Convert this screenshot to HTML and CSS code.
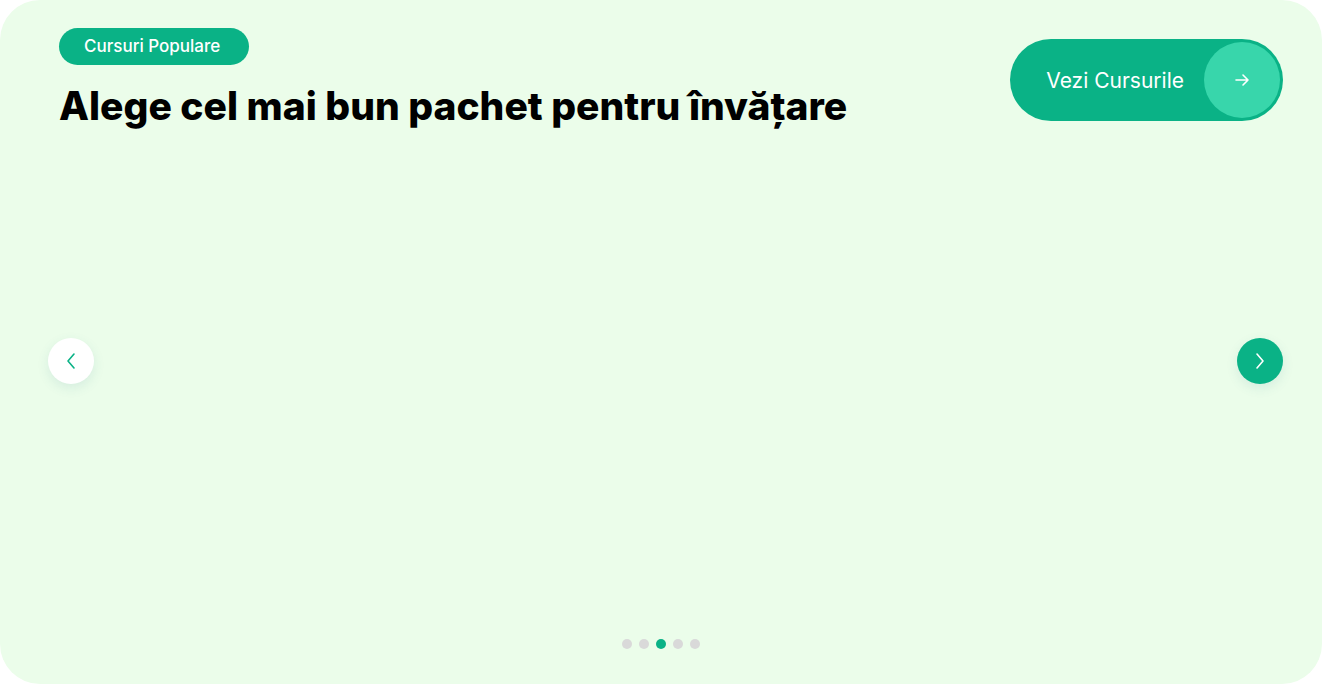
FILE: index.html
```html
<!DOCTYPE html>
<html lang="ro">
<head>
<meta charset="utf-8">
<title>Cursuri Populare</title>
<link rel="stylesheet" href="styles.css">
</head>
<body>
<section class="hero">
  <header class="hero-head">
    <div class="hero-titles">
      <span class="badge">Cursuri Populare</span>
      <h1 class="title">Alege cel mai bun pachet pentru învățare</h1>
    </div>
    <a class="cta" href="#">
      <span class="cta-label">Vezi Cursurile</span>
      <span class="cta-icon">
        <svg width="18" height="18" viewBox="0 0 18 18" fill="none" stroke="#fff" stroke-width="1.6" stroke-linecap="round" stroke-linejoin="round"><path d="M3 9h12M10 4l5 5-5 5"/></svg>
      </span>
    </a>
  </header>
  <div class="slider">
    <button class="nav nav-prev" aria-label="Înapoi">
      <svg width="14" height="20" viewBox="0 0 14 20" fill="none" stroke="#0ab286" stroke-width="1.6" stroke-linecap="round" stroke-linejoin="round"><path d="M10 3L4 10l6 7"/></svg>
    </button>
    <button class="nav nav-next" aria-label="Înainte">
      <svg width="14" height="20" viewBox="0 0 14 20" fill="none" stroke="#fff" stroke-width="1.6" stroke-linecap="round" stroke-linejoin="round"><path d="M4 3l6 7-6 7"/></svg>
    </button>
  </div>
  <div class="dots">
    <span class="dot"></span>
    <span class="dot"></span>
    <span class="dot active"></span>
    <span class="dot"></span>
    <span class="dot"></span>
  </div>
</section>
</body>
</html>
```
FILE: styles.css
```css
html, body {
  margin: 0;
  padding: 0;
  background: #ffffff;
}
body {
  font-family: Inter, "Noto Sans", sans-serif;
}
.hero {
  width: 1322px;
  height: 684px;
  box-sizing: border-box;
  background: #ebfdea;
  border-radius: 40px;
  padding: 28px 39px 35px 59px;
  display: flex;
  flex-direction: column;
}
.hero-head {
  display: flex;
  justify-content: space-between;
  align-items: flex-start;
}
.hero-titles {
  display: flex;
  flex-direction: column;
  align-items: flex-start;
}
.badge {
  background: #0ab286;
  color: #fff;
  font-size: 17px;
  font-weight: 500;
  height: 37px;
  line-height: 37px;
  padding: 0 29px 0 25px;
  border-radius: 20px;
}
.title {
  margin: 18px 0 0;
  font-family: Inter, sans-serif;
  font-weight: 800;
  font-size: 39px;
  line-height: 46px;
  color: #000;
  letter-spacing: 0;
}
.cta {
  margin-top: 11px;
  display: flex;
  align-items: center;
  height: 82px;
  box-sizing: border-box;
  padding: 3px 3px 3px 36px;
  background: #0ab286;
  border-radius: 41px;
  text-decoration: none;
  gap: 20px;
}
.cta-label {
  color: #fff;
  font-size: 21px;
  font-weight: 400;
}
.cta-icon {
  width: 76px;
  height: 76px;
  border-radius: 50%;
  background: #38d6ab;
  display: flex;
  align-items: center;
  justify-content: center;
}
.slider {
  flex: 1;
  display: flex;
  justify-content: space-between;
  align-items: center;
  margin-left: -11px;
  padding-bottom: 46px;
}
.nav {
  width: 46px;
  height: 46px;
  border-radius: 50%;
  border: none;
  padding: 0;
  display: flex;
  align-items: center;
  justify-content: center;
  cursor: pointer;
  box-shadow: 0 4px 12px rgba(60, 120, 150, 0.12);
}
.nav-prev { background: #fff; }
.nav-next { background: #0ab286; }
.dots {
  display: flex;
  justify-content: center;
  gap: 7px;
  margin-left: -20px;
}
.dot {
  width: 10px;
  height: 10px;
  border-radius: 50%;
  background: #d9d9d9;
}
.dot.active { background: #0ab286; }
```
